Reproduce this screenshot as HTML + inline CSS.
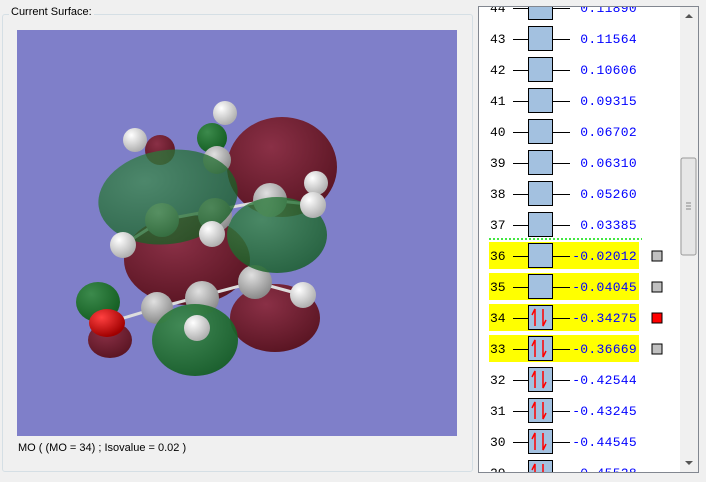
<!DOCTYPE html>
<html><head><meta charset="utf-8"><style>
body{margin:0;width:706px;height:482px;background:#f0f0f0;overflow:hidden;position:relative;font-family:"Liberation Sans",sans-serif}
.gb{position:absolute;left:2px;top:14px;width:469px;height:456px;border:1px solid #d5dfe5;border-radius:3px}
.lbl{position:absolute;left:9px;top:6px;background:#f0f0f0;padding:0 2px;font-size:11px;color:#000}
.vp{position:absolute;left:17px;top:30px;width:440px;height:406px;background:#7f7fc9;overflow:hidden}
.cap{position:absolute;left:18px;top:442px;font-size:11px}
.list{position:absolute;left:478px;top:6px;width:219px;height:465px;border:1px solid #828790;background:#fff;overflow:hidden}
</style></head><body>
<div class="gb"></div><div class="lbl">Current Surface:</div>
<div class="vp">
<svg width="440" height="406" viewBox="17 30 440 406">
<defs>
<radialGradient id="g" cx="0.35" cy="0.3" r="0.8"><stop offset="0" stop-color="#3c8a4c"/><stop offset="1" stop-color="#105a1e"/></radialGradient>
<radialGradient id="m" cx="0.4" cy="0.3" r="0.8"><stop offset="0" stop-color="#8a3046"/><stop offset="1" stop-color="#55121f"/></radialGradient>
<radialGradient id="h" cx="0.35" cy="0.3" r="0.7"><stop offset="0" stop-color="#fff"/><stop offset="1" stop-color="#b0b0b0"/></radialGradient>
<radialGradient id="c" cx="0.4" cy="0.3" r="0.7"><stop offset="0" stop-color="#e0e0e0"/><stop offset="1" stop-color="#8a8a8a"/></radialGradient>
<radialGradient id="o" cx="0.35" cy="0.3" r="0.7"><stop offset="0" stop-color="#ff4040"/><stop offset="1" stop-color="#a00000"/></radialGradient>
</defs>
<ellipse cx="110" cy="340" rx="22" ry="18" fill="url(#m)"/>
<ellipse cx="98" cy="302" rx="22" ry="20" fill="url(#g)"/>
<ellipse cx="160" cy="150" rx="15" ry="15" fill="url(#m)"/>
<ellipse cx="212" cy="138" rx="15" ry="15" fill="url(#g)"/>
<ellipse cx="282" cy="167" rx="55" ry="50" fill="url(#m)"/>
<ellipse cx="187" cy="260" rx="63" ry="45" fill="url(#m)"/>
<ellipse cx="275" cy="318" rx="45" ry="34" fill="url(#m)"/>
<g stroke="#ddd" stroke-width="3">
<line x1="107" y1="323" x2="157" y2="308"/><line x1="157" y1="308" x2="255" y2="282"/><line x1="255" y1="282" x2="303" y2="295"/>
<line x1="162" y1="220" x2="270" y2="200"/><line x1="270" y1="200" x2="317" y2="205"/><line x1="123" y1="245" x2="162" y2="220"/>
</g>
<circle cx="270" cy="200" r="17" fill="url(#c)"/>
<circle cx="255" cy="282" r="17" fill="url(#c)"/>
<circle cx="202" cy="298" r="17" fill="url(#c)"/>
<circle cx="157" cy="308" r="16" fill="url(#c)"/>
<ellipse cx="277" cy="235" rx="50" ry="38" fill="url(#g)" opacity="0.8"/>
<ellipse cx="195" cy="340" rx="43" ry="36" fill="url(#g)" opacity="0.92"/>
<circle cx="162" cy="220" r="17" fill="url(#c)"/>
<circle cx="215" cy="215" r="17" fill="url(#c)"/>
<circle cx="217" cy="160" r="14" fill="url(#c)"/>
<ellipse cx="168" cy="197" rx="70" ry="47" fill="url(#g)" opacity="0.75" transform="rotate(-8 168 197)"/>
<circle cx="225" cy="113" r="12" fill="url(#h)"/>
<circle cx="135" cy="140" r="12" fill="url(#h)"/>
<circle cx="316" cy="183" r="12" fill="url(#h)"/>
<circle cx="313" cy="205" r="13" fill="url(#h)"/>
<circle cx="212" cy="234" r="13" fill="url(#h)"/>
<circle cx="123" cy="245" r="13" fill="url(#h)"/>
<circle cx="303" cy="295" r="13" fill="url(#h)"/>
<circle cx="197" cy="328" r="13" fill="url(#h)"/>
<ellipse cx="107" cy="323" rx="18" ry="14" fill="url(#o)"/>
</svg>
</div>
<div class="cap">MO ( (MO = 34) ; Isovalue = 0.02 )</div>
<div class="list">
<svg width="219" height="465" viewBox="479 7 219 465" font-family="Liberation Mono, monospace" font-size="13">
<rect x="489" y="242" width="150" height="27" fill="#ff0"/>
<rect x="489" y="273" width="150" height="27" fill="#ff0"/>
<rect x="489" y="304" width="150" height="27" fill="#ff0"/>
<rect x="489" y="335" width="150" height="27" fill="#ff0"/>
<line x1="489" y1="239" x2="642" y2="239" stroke="#0d0" stroke-width="1.5" stroke-dasharray="2,2"/>
<g id="rows"></g>
<rect x="652" y="251" width="10" height="10" fill="#c0c0c0" stroke="#000"/>
<rect x="652" y="282" width="10" height="10" fill="#c0c0c0" stroke="#000"/>
<rect x="652" y="313" width="10" height="10" fill="#f00" stroke="#000"/>
<rect x="652" y="344" width="10" height="10" fill="#c0c0c0" stroke="#000"/>
<rect x="680" y="7" width="18" height="465" fill="#f0f0f0"/>
<rect x="681" y="158" width="15" height="97" rx="2" fill="#e6e6e6" stroke="#9a9a9a"/>
<line x1="686" y1="203" x2="691" y2="203" stroke="#888"/><line x1="686" y1="206" x2="691" y2="206" stroke="#888"/><line x1="686" y1="209" x2="691" y2="209" stroke="#888"/>
<path d="M685 18 L689 14 L693 18Z" fill="#555"/>
<path d="M685 461 L689 465 L693 461Z" fill="#555"/>
</svg>
</div>
<script>
var vals=[["44","0.11890"],["43","0.11564"],["42","0.10606"],["41","0.09315"],["40","0.06702"],["39","0.06310"],["38","0.05260"],["37","0.03385"],["36","-0.02012"],["35","-0.04045"],["34","-0.34275"],["33","-0.36669"],["32","-0.42544"],["31","-0.43245"],["30","-0.44545"],["29","-0.45528"]];
var s="";
vals.forEach(function(v,k){var y=8+31*k;var occ=k>=10;
s+='<text x="490" y="'+(y+4)+'" fill="#000">'+v[0]+'</text>';
s+='<line x1="513" y1="'+(y+0.5)+'" x2="570" y2="'+(y+0.5)+'" stroke="#000"/>';
s+='<rect x="528.5" y="'+(y-12.5)+'" width="24" height="24" fill="#a3c1e0" stroke="#000"/>';
if(occ){s+='<path d="M535 '+(y+8)+' L535 '+(y-9)+' L532 '+(y-3)+'" stroke="#f00" stroke-width="1.5" fill="none"/><path d="M543 '+(y-9)+' L543 '+(y+8)+' L546 '+(y+2)+'" stroke="#f00" stroke-width="1.5" fill="none"/>';}
s+='<text x="637" y="'+(y+4)+'" fill="#00f" text-anchor="end" letter-spacing="0.3">'+v[1]+'</text>';});
document.getElementById("rows").outerHTML=s;
</script>
</body></html>
